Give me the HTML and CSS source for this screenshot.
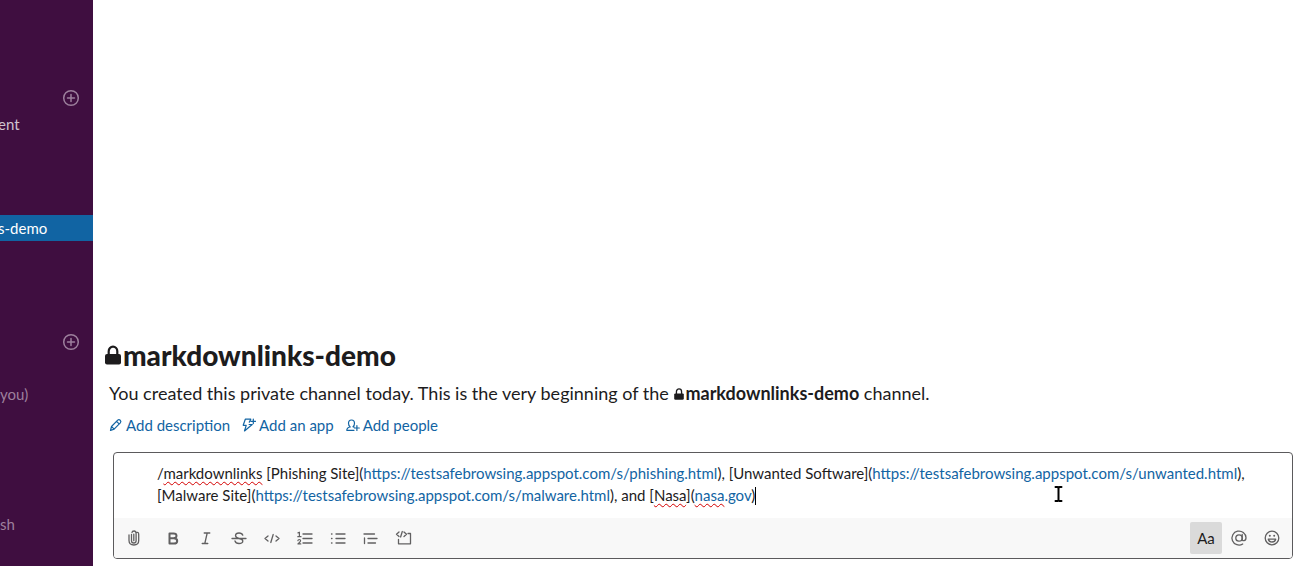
FILE: index.html
```html
<!DOCTYPE html>
<html lang="en">
<head>
<meta charset="utf-8">
<meta name="viewport" content="width=device-width, initial-scale=1">
<title>markdownlinks-demo</title>
<link rel="stylesheet" href="styles.css">
</head>
<body>
<svg class="sprite" aria-hidden="true">
  <symbol id="plus" viewBox="0 0 18 18"><circle cx="9" cy="9" r="7.3"/><path d="M9 5.5v7M5.5 9h7"/></symbol>
  <symbol id="lock" viewBox="0 0 16 20"><path class="solid" d="M2 9h12q2 0 2 2v6.500q0 2-2 2H2q-2 0-2-2V11q0-2 2-2z"/><path class="shackle" d="M3.700 10V6.300a4.300 4.700 0 0 1 8.600 0V10"/></symbol>
</svg>
<nav class="sidebar" aria-label="Channels">
  <section class="group">
    <button class="add" type="button" aria-label="Add channels"><svg><use href="#plus"/></svg></button>
    <a class="row" href="#ent">ent</a>
    <a class="row row-active" href="#demo" aria-current="page">s-demo</a>
  </section>
  <section class="group">
    <button class="add" type="button" aria-label="Open a direct message"><svg><use href="#plus"/></svg></button>
    <a class="row row-you" href="#you">you)</a>
    <a class="row row-last" href="#sh">sh</a>
  </section>
</nav>
<main class="main">
  <header class="intro">
    <h1 class="title"><svg class="lock"><use href="#lock"/></svg>markdownlinks-demo</h1>
    <p class="lead">You created this private channel today. This is the very beginning of the <strong><svg class="lock lock-small"><use href="#lock"/></svg>markdownlinks-demo</strong> channel.</p>
    <div class="actions">
      <a class="action" href="#description"><svg viewBox="0 0 14 14"><path d="M1.500 12.500l1-4 6.200-6.300q1.200-1.200 2.500 0 1.300 1.300.1 2.600l-6.200 6.300zM7.600 3.400l2.500 2.500M2.600 8.600l2.600 2.500"/></svg>Add description</a>
      <a class="action" href="#app"><svg viewBox="0 0 14 14"><path d="M8.800 1.200H3.300L1.200 7.300h3L2.500 13l7.700-6.500H7.100M8.800 1.200L7.300 4.100M11.300 1v4.600M9 3.300h4.600"/></svg>Add an app</a>
      <a class="action" href="#people"><svg viewBox="0 0 14 14"><path d="M8 12.300H.8q0-2.800 3.400-3.300-1.700-1.300-1.700-3.700Q2.500 2 5.500 2t3 3.300q0 2.400-1.500 3.400l1 .4M10.900 7.600v4.800M8.500 10h4.800"/></svg>Add people</a>
    </div>
  </header>
  <form class="composer">
    <div class="editor" role="textbox" aria-multiline="true" aria-label="Message" contenteditable="true" spellcheck="false">/<span class="misspelt">markdownlinks</span> [Phishing Site](<a href="#phishing">https://testsafebrowsing.appspot.com/s/phishing.html</a>), [Unwanted Software](<a href="#unwanted">https://testsafebrowsing.appspot.com/s/unwanted.html</a>), [Malware Site](<a href="#malware">https://testsafebrowsing.appspot.com/s/malware.html</a>), and [<span class="misspelt">Nasa</span>](<a href="#nasa"><span class="misspelt">nasa</span>.gov</a>)<span class="caret"></span></div>
    <div class="toolbar">
      <button class="tool" type="button" aria-label="Attach file"><svg viewBox="0 0 18 18"><path d="M6.500 5.500v6.300q0 2.200 2.300 2.200t2.300-2.200V4.500q0-2.500-2-2.500T7 3.500M11.100 3.500q2.600-.9 2.600 2v6q0 4.500-4.800 4.500T4 11.500V6M8.800 5.200v6.500"/></svg></button>
      <div class="formats">
        <button class="tool" type="button" aria-label="Bold"><svg viewBox="0 0 18 18"><path class="thick" d="M5.500 4.400h4q3 0 3 2.400T9.500 9.200h-4zM5.500 9.200h4.300q3.400 0 3.400 2.700t-3.400 2.700H5.500z"/></svg></button>
        <button class="tool" type="button" aria-label="Italic"><svg viewBox="0 0 18 18"><path d="M7.200 4h5.600M5.200 14.500h5.600M10.200 4L7.800 14.500"/></svg></button>
        <button class="tool" type="button" aria-label="Strikethrough"><svg viewBox="0 0 18 18"><path d="M2 9.500h14M12.800 6.200q-.7-2.200-3.800-2.200-3.300 0-3.500 2.300Q5.400 8.600 9 9.500q3.800.8 3.800 2.500 0 2.500-3.800 2.500-3.300 0-4-2.500"/></svg></button>
        <button class="tool" type="button" aria-label="Code"><svg viewBox="0 0 18 18"><path d="M5 7L2 9.500 5 12M13 7l3 2.500-3 2.500M10.200 5.500l-2.400 8"/></svg></button>
        <button class="tool" type="button" aria-label="Ordered list"><svg viewBox="0 0 18 18"><path d="M7 5h9M7 9.500h9M7 14h9"/><path class="fine" d="M2 3.900l1.400-.7v4.500M1.800 7.700H5M1.900 11.700q.2-1.200 1.400-1.200 1.300 0 1.300 1.200 0 .7-2.700 3.200h2.900"/></svg></button>
        <button class="tool" type="button" aria-label="Bulleted list"><svg viewBox="0 0 18 18"><path d="M7 5h9M7 9.500h9M7 14h9M2.500 5H3M2.500 9.500H3M2.500 14H3"/></svg></button>
        <button class="tool" type="button" aria-label="Block quote"><svg viewBox="0 0 18 18"><path d="M2 5h10.500M6 9.500h9M6 14h7.500M2.500 9v5.500"/></svg></button>
        <button class="tool" type="button" aria-label="Code block"><svg viewBox="0 0 18 18"><path d="M4 3L1.500 5.300 4 7.500M9 3l2.500 2.300L9 7.500M7.300 2.500L5.600 8M13 4.500h2.500v10.300h-12V10.500"/></svg></button>
      </div>
      <div class="extras">
        <button class="tool tool-on" type="button" aria-pressed="true" aria-label="Hide formatting">Aa</button>
        <button class="tool" type="button" aria-label="Mention someone"><svg viewBox="0 0 18 18"><circle cx="9" cy="9" r="3.200"/><path d="M12.200 5.500v4.800q0 1.600 1.800 1.400 2-.3 2-2.900A7 7 0 1 0 12.700 15"/></svg></button>
        <button class="tool" type="button" aria-label="Emoji"><svg viewBox="0 0 18 18"><circle cx="9" cy="9" r="6.800"/><path d="M5.300 10.200h7.400q-.8 2.800-3.700 2.800t-3.700-2.800z"/><circle class="solid" cx="6.800" cy="6.800" r="1"/><circle class="solid" cx="11.200" cy="6.800" r="1"/></svg></button>
      </div>
    </div>
    <svg class="pointer" viewBox="0 0 9 18" aria-hidden="true"><path class="halo" d="M1.500 2h2l1 1 1-1h2M4.500 3v12M1.500 16h2l1-1 1 1h2"/><path class="core" d="M1.500 2h2l1 1 1-1h2M4.500 3v12M1.500 16h2l1-1 1 1h2"/></svg>
  </form>
</main>
</body>
</html>
```
FILE: styles.css
```css
* { box-sizing: border-box; }
body {
  margin: 0;
  min-height: 100vh;
  display: flex;
  font: 15px/22px Lato, "Liberation Sans", sans-serif;
  color: #1d1c1d;
  background: #fff;
}
svg { fill: none; stroke: currentColor; stroke-width: 1.5; stroke-linecap: round; stroke-linejoin: round; }
button { border: 0; padding: 0; background: none; font: inherit; color: inherit; cursor: pointer; }
a { color: #1264a3; text-decoration: none; }
.sprite { position: absolute; width: 0; height: 0; }
.solid { fill: currentColor; stroke: none; }
.shackle { stroke-width: 2.2; }
.thick { stroke-width: 2; }
.fine { stroke-width: 1.2; }

.sidebar {
  flex: 0 0 93px;
  padding-top: 85px;
  background: #3f0e40;
  color: #9d809d;
  overflow: hidden;
}
.group { display: flex; flex-direction: column; margin-bottom: 88px; }
.group:last-child { margin-bottom: 0; }
.add { align-self: flex-end; display: grid; place-items: center; width: 18px; height: 26px; margin-right: 13px; }
.add svg { width: 18px; height: 18px; }
.row { color: #cfc3cf; line-height: 26px; height: 26px; text-indent: -2px; }
.row-active { margin-top: 78px; background: #1164a3; color: #fff; }
.row-you { margin-top: 26px; color: #9d809d; text-indent: 0; }
.row-last { margin-top: 104px; color: #9d809d; text-indent: 0; }

.main { flex: 1; min-width: 0; display: flex; flex-direction: column; justify-content: flex-end; padding: 0 9px 7px 12px; }
.intro { padding-left: 4px; }
.title { display: flex; align-items: center; gap: 2px; margin: 0 0 0 -4px; font-size: 28px; line-height: 34px; font-weight: 900; }
.lock { flex: none; width: 16px; height: 20px; }
.lock-small { width: 10px; height: 12px; margin: 0 1px; }
.lead { margin: 9px 0; font-size: 18px; line-height: 24px; }
.actions { display: flex; flex-wrap: wrap; gap: 12px; }
.action { display: flex; align-items: center; gap: 3px; }
.action svg { width: 14px; height: 14px; stroke-width: 1.2; }

.composer { position: relative; margin: 16px 0 0 8px; border: 1px solid #5b5a5c; border-radius: 4px; background: #fff; overflow: hidden; }
.editor { padding: 9px 43px 12px; outline: 0; }
.misspelt { text-decoration: underline wavy #d40000 1px; text-underline-offset: 2px; text-decoration-skip-ink: none; }
.caret { display: inline-block; width: 1px; height: 18px; vertical-align: -4px; background: #000; }
.toolbar { display: flex; align-items: center; padding: 4px; background: #f8f8f8; color: #616061; }
.formats { display: flex; gap: 1px; margin-left: 7px; }
.extras { display: flex; gap: 1px; margin-left: auto; }
.tool { display: grid; place-items: center; width: 32px; height: 32px; border-radius: 2px; }
.tool svg { width: 18px; height: 18px; stroke-width: 1.3; }
.tool-on { background: #dadada; color: #1d1c1d; }
.pointer { position: absolute; left: 940px; top: 32px; width: 9px; height: 18px; }
.halo { stroke: #fff; stroke-width: 4; }
.core { stroke: #000; stroke-width: 2; }
```
